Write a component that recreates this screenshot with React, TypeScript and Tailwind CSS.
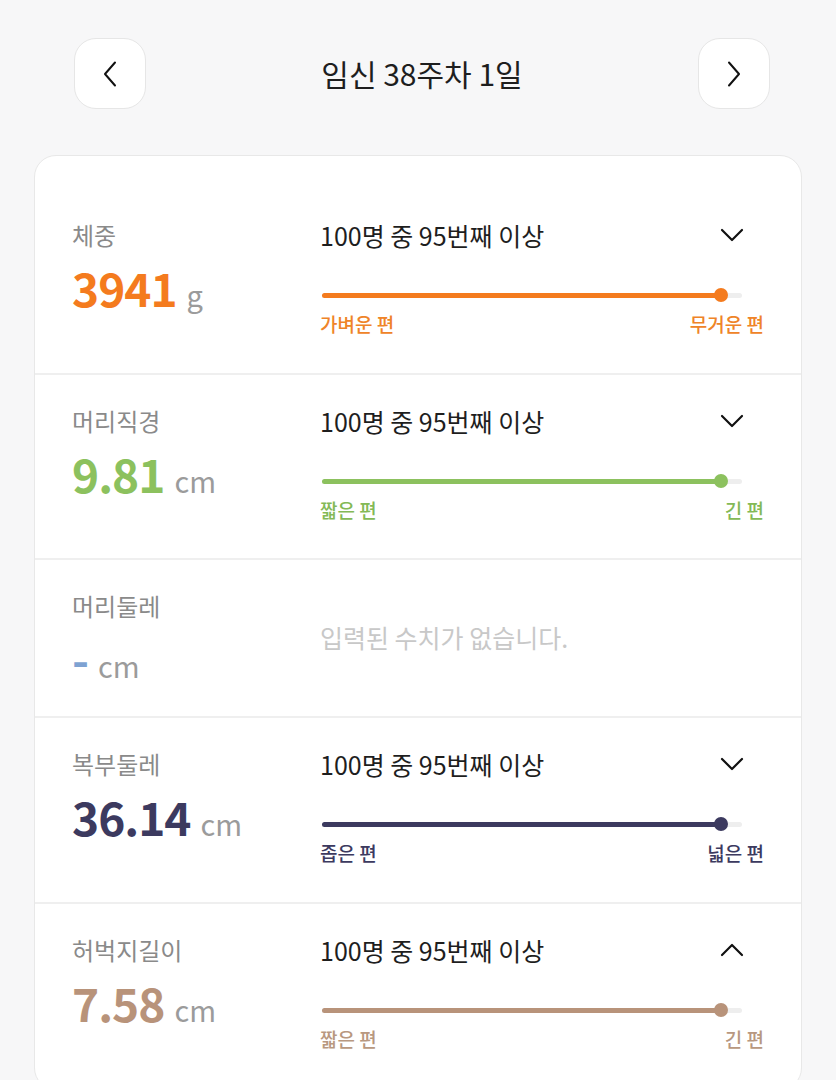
import React from "react";

type Metric = {
  label: string;
  value: string;
  unit: string;
  color: string;
  labelColor: string;
  percent?: number;
  low?: string;
  high?: string;
  open?: boolean;
  rowClass: string;
};

const metrics: Metric[] = [
  {
    label: "체중",
    value: "3941",
    unit: "g",
    color: "text-[#f47b1e]",
    labelColor: "text-[#ef8428]",
    percent: 95,
    low: "가벼운 편",
    high: "무거운 편",
    rowClass: "h-[219px] pt-[62px]",
  },
  {
    label: "머리직경",
    value: "9.81",
    unit: "cm",
    color: "text-[#8cc15e]",
    labelColor: "text-[#84b956]",
    percent: 95,
    low: "짧은 편",
    high: "긴 편",
    rowClass: "h-[185px] pt-[29px]",
  },
  {
    label: "머리둘레",
    value: "-",
    unit: "cm",
    color: "text-[#7ea2d2]",
    labelColor: "",
    rowClass: "h-[158px] pt-[29px]",
  },
  {
    label: "복부둘레",
    value: "36.14",
    unit: "cm",
    color: "text-[#3c3a5f]",
    labelColor: "text-[#3c3a5f]",
    percent: 95,
    low: "좁은 편",
    high: "넓은 편",
    rowClass: "h-[186px] pt-[29px]",
  },
  {
    label: "허벅지길이",
    value: "7.58",
    unit: "cm",
    color: "text-[#b8937a]",
    labelColor: "text-[#b89880]",
    percent: 95,
    low: "짧은 편",
    high: "긴 편",
    open: true,
    rowClass: "h-[185px] pt-[29px]",
  },
];

const barFill: Record<string, string> = {
  "체중": "bg-[#f47b1e]",
  "머리직경": "bg-[#8cc15e]",
  "복부둘레": "bg-[#3c3a5f]",
  "허벅지길이": "bg-[#b8937a]",
};

function Chevron({ up }: { up?: boolean }) {
  return (
    <svg width="24" height="14" viewBox="0 0 24 14" fill="none">
      <path
        d={up ? "M2 12 L12 2 L22 12" : "M2 2 L12 12 L22 2"}
        stroke="#111"
        strokeWidth="2.2"
        strokeLinecap="round"
        strokeLinejoin="round"
      />
    </svg>
  );
}

function NavButton({ dir }: { dir: "prev" | "next" }) {
  return (
    <button className="w-[72px] h-[71px] rounded-[22px] bg-white border-[1.5px] border-[#e6e6e6] flex items-center justify-center">
      <svg width="14" height="26" viewBox="0 0 14 26" fill="none">
        <path
          d={dir === "prev" ? "M12 1.5 L2 13 L12 24.5" : "M2 1.5 L12 13 L2 24.5"}
          stroke="#111"
          strokeWidth="2"
          strokeLinecap="round"
          strokeLinejoin="round"
        />
      </svg>
    </button>
  );
}

function Row({ m, last }: { m: Metric; last: boolean }) {
  const hasData = m.percent !== undefined;
  return (
    <div
      className={`flex pl-[37px] pr-[37px] ${m.rowClass} ${
        last ? "" : "border-b-2 border-[#efefef]"
      }`}
    >
      <div className="w-[248px] shrink-0 flex flex-col">
        <div className="h-[34px] leading-[34px] text-[24px] text-[#8a8a8a]">
          {m.label}
        </div>
        <div className="mt-[10px] h-[50px] flex items-baseline">
          <span
            className={`text-[46px] leading-[50px] font-bold tracking-[-1px] ${m.color}`}
          >
            {m.value}
          </span>
          <span className="ml-[10px] text-[29px] leading-[50px] text-[#9b9b9b]">
            {m.unit}
          </span>
        </div>
      </div>

      {hasData ? (
        <div className="flex-1 flex flex-col">
          <div className="h-[34px] flex items-center justify-between pr-[20px]">
            <span className="text-[25px] leading-[34px] text-[#1e1e1e]">
              100명 중 95번째 이상
            </span>
            <Chevron up={m.open} />
          </div>
          <div className="mt-[36px] ml-[2px] w-[420px] h-[14px] relative flex items-center">
            <div className="w-full h-[5px] rounded-full bg-[#eeeeee]" />
            <div
              className={`absolute left-0 h-[5px] rounded-full ${barFill[m.label]}`}
              style={{ width: `${m.percent}%` }}
            />
            <div
              className={`absolute w-[14px] h-[14px] rounded-full -translate-x-1/2 ${barFill[m.label]}`}
              style={{ left: `${m.percent}%` }}
            />
          </div>
          <div
            className={`mt-[9px] flex justify-between text-[19px] leading-[26px] font-medium ${m.labelColor}`}
          >
            <span>{m.low}</span>
            <span>{m.high}</span>
          </div>
        </div>
      ) : (
        <div className="flex-1 flex items-center -mt-[29px]">
          <span className="text-[25px] text-[#c8c8c8]">
            입력된 수치가 없습니다.
          </span>
        </div>
      )}
    </div>
  );
}

export default function App() {
  return (
    <div
      className="h-[1080px] overflow-hidden bg-[#f7f7f8]"
      style={{ fontFamily: '"Noto Sans CJK KR", "Noto Sans", sans-serif' }}
    >
      <div className="pt-[38px] pl-[74px] pr-[66px] flex items-center justify-between">
        <NavButton dir="prev" />
        <h1 className="text-[30px] text-[#1e1e1e] font-normal">
          임신 38주차 1일
        </h1>
        <NavButton dir="next" />
      </div>

      <div className="mt-[46px] mx-[34px] w-[768px] bg-white border-[1.5px] border-[#e8e8e8] rounded-[22px]">
        {metrics.map((m, i) => (
          <Row key={m.label} m={m} last={i === metrics.length - 1} />
        ))}
      </div>
    </div>
  );
}
